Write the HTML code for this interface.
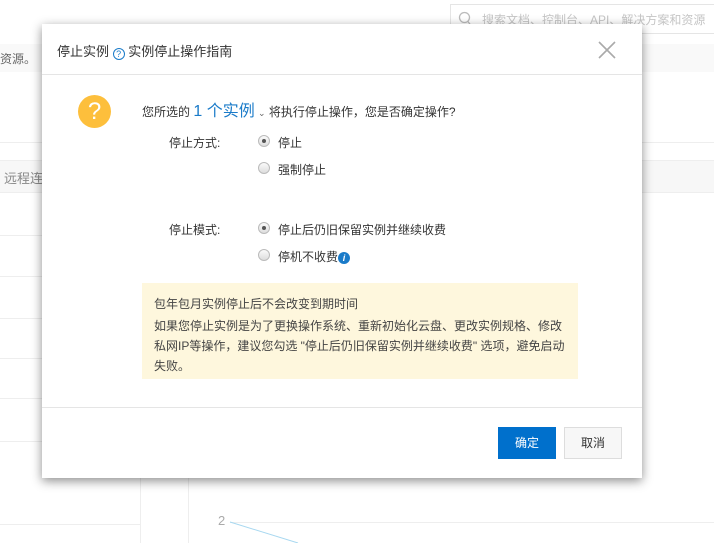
<!DOCTYPE html>
<html><head><meta charset="utf-8"><style>
*{margin:0;padding:0;box-sizing:border-box}
body{width:714px;height:543px;overflow:hidden;background:#fff;position:relative;font-family:"Liberation Sans","Noto Sans CJK SC",sans-serif;font-size:12px;color:#333}
.a{position:absolute}
.hl{position:absolute;height:1px;background:#eee}
.m{position:absolute;left:42px;top:24px;width:600px;height:454px;background:#fff;box-shadow:0 3px 10px rgba(0,0,0,.45)}
.radio{position:absolute;width:12px;height:12px;border-radius:50%;border:1px solid #bbb;background:linear-gradient(#fafafa,#ddd)}
.radio.on::after{content:"";position:absolute;left:3px;top:3px;width:4px;height:4px;border-radius:50%;background:#555}
</style></head><body>
<div class="a" style="left:450px;top:4px;width:270px;height:30px;border:1px solid #e5e5e5"></div>
<svg class="a" style="left:458px;top:11px" width="14" height="16"><circle cx="6.5" cy="6.5" r="5" fill="none" stroke="#bbb" stroke-width="1.3"/><line x1="10" y1="10.5" x2="12.5" y2="14" stroke="#bbb" stroke-width="1.3"/></svg>
<div class="a" style="left:482px;top:11px;color:#c5c5c5;font-size:12px;white-space:nowrap">搜索文档、控制台、API、解决方案和资源</div>
<div class="a" style="left:0;top:44px;width:714px;height:28px;background:#f9f9f9"></div>
<div class="a" style="left:0;top:50px;color:#666">资源。</div>
<div class="hl" style="left:0;top:142px;width:714px"></div>
<div class="a" style="left:0;top:160px;width:714px;height:32px;background:#f7f7f7;border-top:1px solid #eee"></div>
<div class="a" style="left:4px;top:168px;color:#888;font-size:13px">远程连</div>
<div class="hl" style="left:0;top:192px;width:714px"></div>
<div class="hl" style="left:0;top:235px;width:140px"></div>
<div class="hl" style="left:0;top:276px;width:140px"></div>
<div class="hl" style="left:0;top:318px;width:140px"></div>
<div class="hl" style="left:0;top:358px;width:140px"></div>
<div class="hl" style="left:0;top:398px;width:140px"></div>
<div class="hl" style="left:0;top:441px;width:140px"></div>
<div class="hl" style="left:0;top:524px;width:140px"></div>
<div class="a" style="left:140px;top:470px;width:1px;height:73px;background:#eee"></div>
<div class="a" style="left:188px;top:470px;width:1px;height:73px;background:#eee"></div>
<div class="hl" style="left:230px;top:522px;width:484px"></div>
<div class="a" style="left:218px;top:513px;color:#aaa;font-size:13px">2</div>
<svg class="a" style="left:228px;top:518px" width="80" height="25"><line x1="2" y1="4" x2="70" y2="25" stroke="#a8d8f0" stroke-width="1"/></svg>
<div class="m">
 <div class="a" style="left:15px;top:17px;font-size:13px;color:#333;white-space:nowrap">停止实例 <span style="display:inline-block;width:12px;height:12px;border:1px solid #1a7bc9;border-radius:50%;color:#1a7bc9;font-size:9px;line-height:10px;text-align:center;vertical-align:-1px">?</span> 实例停止操作指南</div>
 <svg class="a" style="left:556px;top:17px" width="18" height="18"><path d="M1 1L17 17M17 1L1 17" stroke="#aaa" stroke-width="1.6"/></svg>
 <div class="hl" style="left:0;top:50px;width:600px;background:#e5e5e5"></div>
 <div class="a" style="left:36px;top:71px;width:33px;height:33px;border-radius:50%;background:#fdbf3c;color:#fff;font-size:24px;line-height:33px;text-align:center">?</div>
 <div class="a" style="left:100px;top:73px;white-space:nowrap;color:#333">您所选的 <span style="color:#1a7bc9;font-size:16px">1 个实例</span> <span style="color:#666;font-size:9px">⌄</span> 将执行停止操作，您是否确定操作?</div>
 <div class="a" style="left:127px;top:110px">停止方式:</div>
 <div class="radio on" style="left:216px;top:111px"></div><div class="a" style="left:236px;top:110px">停止</div>
 <div class="radio" style="left:216px;top:138px"></div><div class="a" style="left:236px;top:137px">强制停止</div>
 <div class="a" style="left:127px;top:197px">停止模式:</div>
 <div class="radio on" style="left:216px;top:198px"></div><div class="a" style="left:236px;top:197px">停止后仍旧保留实例并继续收费</div>
 <div class="radio" style="left:216px;top:225px"></div><div class="a" style="left:236px;top:224px">停机不收费<span style="display:inline-block;width:12px;height:12px;border-radius:50%;background:#1a7bc9;color:#fff;font-size:9px;font-style:italic;font-weight:bold;line-height:12px;text-align:center;vertical-align:0">i</span></div>
 <div class="a" style="left:100px;top:259px;width:436px;height:96px;background:#fef7dd;padding:11px 11px 0 12px;color:#444;line-height:20px">
  <div style="margin-bottom:2px">包年包月实例停止后不会改变到期时间</div>
  <div>如果您停止实例是为了更换操作系统、重新初始化云盘、更改实例规格、修改私网IP等操作，建议您勾选 "停止后仍旧保留实例并继续收费" 选项，避免启动失败。</div>
 </div>
 <div class="hl" style="left:0;top:383px;width:600px;background:#e5e5e5"></div>
 <div class="a" style="left:456px;top:403px;width:58px;height:32px;background:#0070cc;color:#fff;text-align:center;line-height:32px">确定</div>
 <div class="a" style="left:522px;top:403px;width:58px;height:32px;background:#f7f7f7;border:1px solid #ddd;color:#333;text-align:center;line-height:30px">取消</div>
</div>
</body></html>
